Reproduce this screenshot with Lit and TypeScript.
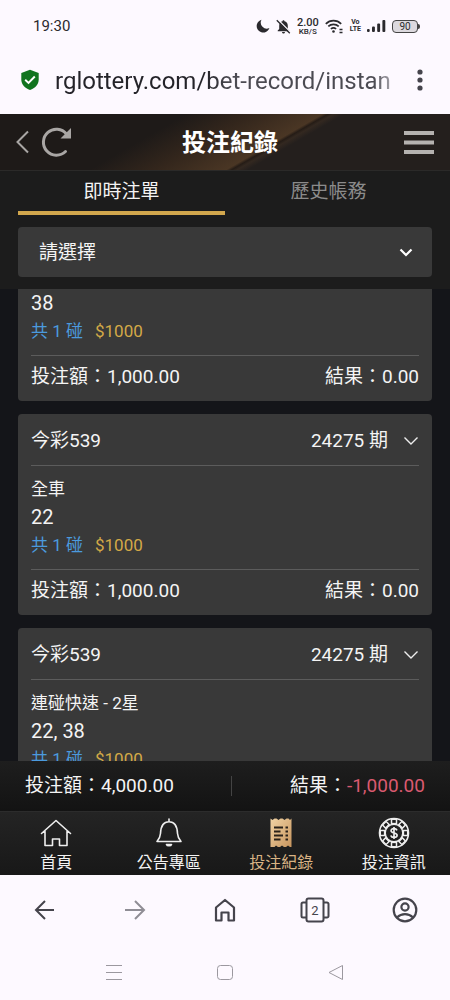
import { LitElement, html, css, svg } from "lit";
import { customElement, property, query } from "lit/decorators.js";
import { classMap } from "lit/directives/class-map.js";

interface Bet {
  game: string;
  issue: string;
  play: string;
  numbers: string;
  combos: number;
  stake: string;
  amount: string;
  result: string;
}

const bets: Bet[] = [
  { game: "今彩539", issue: "24275 期", play: "全車", numbers: "38", combos: 1, stake: "$1000", amount: "1,000.00", result: "0.00" },
  { game: "今彩539", issue: "24275 期", play: "全車", numbers: "22", combos: 1, stake: "$1000", amount: "1,000.00", result: "0.00" },
  { game: "今彩539", issue: "24275 期", play: "連碰快速 - 2星", numbers: "22, 38", combos: 1, stake: "$1000", amount: "1,000.00", result: "0.00" },
];

const fontStack = css`Roboto, "Noto Sans CJK TC", sans-serif`;

@customElement("bet-card")
export class BetCard extends LitElement {
  @property({ attribute: false }) bet!: Bet;

  static styles = css`
    :host {
      display: block;
      background: #393939;
      border-radius: 4px;
      padding: 0 13px 10px;
      color: #f4f4f4;
      font: 19px/28px ${fontStack};
    }
    .head {
      display: flex;
      align-items: center;
      justify-content: space-between;
      width: 100%;
      height: 52px;
      padding: 3px 0 0;
      border: 0;
      border-bottom: 1px solid #5c5c5c;
      background: none;
      color: inherit;
      font: inherit;
    }
    .issue {
      display: flex;
      align-items: center;
      gap: 15px;
    }
    .body {
      padding: 9px 0 10px;
      border-bottom: 1px solid #5c5c5c;
    }
    .play {
      font-size: 17px;
    }
    .numbers {
      font-size: 20px;
    }
    .stake {
      display: flex;
      gap: 12px;
      font-size: 17px;
      color: #d3a947;
    }
    .combos {
      color: #4b9ade;
    }
    .foot {
      display: flex;
      justify-content: space-between;
      padding-top: 7px;
    }
  `;

  render() {
    const b = this.bet;
    return html`
      <button class="head">
        <span>${b.game}</span>
        <span class="issue">
          ${b.issue}
          <svg width="16" height="16" viewBox="0 0 16 16" fill="none" stroke="#eee" stroke-width="1.4">
            <path d="M1.5 4.5 8 11l6.500-6.500" />
          </svg>
        </span>
      </button>
      <div class="body">
        <div class="play">${b.play}</div>
        <div class="numbers">${b.numbers}</div>
        <div class="stake"><span class="combos">共 ${b.combos} 碰</span><span>${b.stake}</span></div>
      </div>
      <div class="foot">
        <span>投注額：${b.amount}</span>
        <span>結果：${b.result}</span>
      </div>
    `;
  }
}

const houseIcon = html`<svg width="32" height="32" viewBox="0 0 32 32" fill="none" stroke="#eee" stroke-width="1.600" stroke-linejoin="round" stroke-linecap="round">
  <path d="M1.500 16.500 16 3.500l14.500 13M5 14.500V28.500h7.500v-6.500h7v6.500H27V14.500" />
</svg>`;

const bellIcon = html`<svg width="32" height="32" viewBox="0 0 32 32" fill="none" stroke="#eee" stroke-width="1.600" stroke-linejoin="round" stroke-linecap="round">
  <path d="M16 4.500V2M4 24.500c2.200-2.500 3.300-4.500 3.500-8C7.800 9.500 10.500 4.800 16 4.800s8.200 4.700 8.500 11.700c.2 3.500 1.300 5.500 3.500 8z" />
  <path d="M13.500 27.500h5c-.5 1.700-4.500 1.700-5 0z" fill="#eee" />
</svg>`;

const receiptIcon = html`<svg width="32" height="32" viewBox="0 0 32 32">
  <defs>
    <linearGradient id="gold" x1="0" y1="0" x2="1" y2="1">
      <stop offset="0" stop-color="#f1d3a4" />
      <stop offset="1" stop-color="#c7955e" />
    </linearGradient>
  </defs>
  <path fill="url(#gold)" d="M5.500 1.500 7.500 3 9.500 1.500h2l2 1.500 2-1.500h2l2 1.500 2-1.500h2L25 3l1.500-1.500v28.500h-1.500l-2-1.500-2 1.500h-2l-2-1.500-2 1.500h-2l-2-1.500L9.500 30h-2L5.500 30z" />
  <path stroke="#2a221a" stroke-width="1.800" d="M9 10.500h9M9 14.500h6.500M9 18.500h9M9 22.500h6.500M20.500 10.500h2.500M20.500 14.500h2.500M20.500 18.500h2.500M20.500 22.500h2.500" />
</svg>`;

const chipIcon = html`<svg width="32" height="32" viewBox="0 0 32 32" fill="none" stroke="#eee">
  <circle cx="16" cy="16" r="14.500" stroke-width="1.600" />
  <circle cx="16" cy="16" r="8.800" stroke-width="1.500" />
  ${[0, 45, 90, 135, 180, 225, 270, 315].map(
    (a) => svg`<rect x="13.500" y="2.300" width="5" height="4.300" fill="#1b1b1b" stroke-width="1.500" transform="rotate(${a} 16 16)" />`
  )}
  <path stroke-width="1.700" d="M19 13.300c-.5-1.200-1.600-1.700-3-1.700-1.700 0-2.900.8-2.900 2.100 0 3.100 6 1.400 6 4.600 0 1.300-1.300 2.100-3.100 2.100-1.600 0-2.800-.6-3.200-1.900M16 10v12" />
</svg>`;

const navItems = [
  { label: "首頁", icon: houseIcon, active: false },
  { label: "公告專區", icon: bellIcon, active: false },
  { label: "投注紀錄", icon: receiptIcon, active: true },
  { label: "投注資訊", icon: chipIcon, active: false },
];

@customElement("app-root")
export class AppRoot extends LitElement {
  @query(".list") list!: HTMLElement;

  static styles = css`
    :host {
      display: flex;
      flex-direction: column;
      height: 100vh;
      background: #141519;
      color: #f4f4f4;
      font: 19px/28px ${fontStack};
    }
    * {
      box-sizing: border-box;
    }
    svg {
      display: block;
      flex: none;
    }
    button {
      display: flex;
      align-items: center;
      justify-content: center;
      padding: 0;
      border: 0;
      background: none;
      color: inherit;
      font: inherit;
    }

    .status {
      display: flex;
      align-items: center;
      justify-content: space-between;
      height: 52px;
      padding: 0 30px 0 33px;
      background: #fdf9ff;
      color: #2b2a2e;
      font-size: 15px;
    }
    .indicators {
      display: flex;
      align-items: center;
      gap: 6px;
    }
    .rate,
    .volte {
      display: flex;
      flex-direction: column;
      align-items: center;
      font-weight: 500;
    }
    .rate {
      font-size: 11px;
      line-height: 10px;
    }
    .unit {
      font-size: 8px;
      line-height: 7px;
    }
    .volte {
      font-size: 7px;
      line-height: 7px;
      font-weight: 700;
    }
    .battery {
      display: flex;
      align-items: center;
    }
    .charge {
      width: 26px;
      border: 1px solid #444;
      border-radius: 4px;
      background: #dcd9de;
      font-size: 10px;
      line-height: 11px;
      text-align: center;
    }
    .tip {
      width: 2px;
      height: 5px;
      border-radius: 0 2px 2px 0;
      background: #444;
    }

    .address {
      display: flex;
      align-items: center;
      height: 62px;
      padding: 0 20px 6px;
      background: #fdf9ff;
    }
    .url {
      flex: 1;
      min-width: 0;
      height: 34px;
      margin: 0 16px 0 15px;
      padding: 2px 0 0;
      border: 0;
      outline: 0;
      background: linear-gradient(90deg, #242329 150px, #4b4a52 175px, #4b4a52 calc(100% - 20px), #b5b2ba);
      -webkit-background-clip: text;
      background-clip: text;
      color: transparent;
      font: 24px/32px Roboto, sans-serif;
    }

    .header {
      display: grid;
      grid-template-columns: 1fr auto 1fr;
      align-items: center;
      height: 57px;
      padding: 0 16px;
      border-bottom: 1px solid #2b2a29;
      background: linear-gradient(150deg, #1e1a18 34%, #33261c 46%, #4a3624 59%, #251c16 60%, #332820 61%, #241f1d 63%);
    }
    .left {
      display: flex;
      align-items: center;
      gap: 12px;
    }
    .title {
      margin: 0;
      padding: 2px 0 0 10px;
      font-size: 24px;
      font-weight: 700;
      color: #fff;
    }
    .menu {
      justify-self: end;
    }

    .filters {
      padding: 0 18px 12px;
      background: #1c1c1c;
    }
    .tabs {
      display: grid;
      grid-template-columns: 1fr 1fr;
      margin-bottom: 12px;
    }
    .tab {
      height: 44px;
      padding-top: 2px;
      border-bottom: 4px solid transparent;
      color: #8b8b8b;
    }
    .tab.active {
      border-color: #d2a74d;
      color: #f4f4f4;
    }
    .picker {
      display: block;
      position: relative;
    }
    .select {
      display: block;
      width: 100%;
      height: 50px;
      padding: 2px 21px 0;
      border: 0;
      border-radius: 4px;
      background: #393939;
      color: #f4f4f4;
      font: inherit;
      appearance: none;
    }
    .caret {
      position: absolute;
      right: 19px;
      top: 18px;
      pointer-events: none;
    }

    .list {
      flex: 1;
      min-height: 0;
      overflow-y: auto;
      scrollbar-width: none;
      display: flex;
      flex-direction: column;
      gap: 13px;
      padding: 12px 18px;
    }
    .card {
      flex: none;
    }

    .summary {
      display: flex;
      align-items: center;
      justify-content: space-between;
      height: 50px;
      padding: 0 25px;
      background: linear-gradient(#1e1e1e, #131313);
    }
    .rule {
      width: 1px;
      height: 20px;
      background: #444;
    }
    .loss {
      color: #da5a70;
    }

    .nav {
      display: grid;
      grid-template-columns: repeat(4, 1fr);
      height: 64px;
      border-top: 1px solid #2c2c2c;
      background: linear-gradient(#242424, #181818);
      font-size: 16px;
      line-height: 24px;
    }
    .link {
      display: flex;
      flex-direction: column;
      align-items: center;
      gap: 2px;
      padding-top: 5px;
      color: #f4f4f4;
      text-decoration: none;
    }
    .link.active {
      color: #d9b384;
    }

    .toolbar {
      display: grid;
      grid-template-columns: repeat(5, 1fr);
      height: 70px;
      background: #fdf9ff;
      color: #45444c;
    }
    .toolbar .off {
      color: #8f8d95;
    }
    .system {
      display: grid;
      grid-template-columns: repeat(3, 1fr);
      height: 55px;
      padding: 0 13%;
      background: #fdf9ff;
      color: #9b989f;
    }
  `;

  firstUpdated() {
    // Open the list part-way through the first bet.
    requestAnimationFrame(() => {
      this.list.scrollTop = 101;
    });
  }

  render() {
    return html`
      <div class="status">
        <span>19:30</span>
        <div class="indicators">
          <svg width="14" height="14" viewBox="0 0 14 14" fill="#2b2a2e"><path d="M5.500.8A6.500 6.500 0 1 0 13.400 9 6 6 0 0 1 5.500.8z" /></svg>
          <svg width="15" height="15" viewBox="0 0 15 15"><path fill="#2b2a2e" d="M7.500 1.200c.7 0 1 .5 1 1.100 2 .5 3.300 2.200 3.300 4.400v3.200l1.500 1.600v.7H1.700v-.7l1.500-1.600V6.700c0-2.200 1.300-3.900 3.300-4.400 0-.6.300-1.100 1-1.100zM6 13h3c0 .9-.6 1.500-1.500 1.500S6 13.900 6 13z" /><path stroke="#fdf9ff" stroke-width="1.200" d="m1.800.5 13 13" /><path stroke="#2b2a2e" stroke-width="1.300" d="m.8 1.200 13 13" /></svg>
          <div class="rate"><span>2.00</span><span class="unit">KB/S</span></div>
          <svg width="19" height="16" viewBox="0 0 19 16" fill="none" stroke="#2b2a2e" stroke-width="1.700"><path d="M.8 5.800a11 11 0 0 1 15.400 0M3.300 8.400a7.500 7.500 0 0 1 10.400 0M5.900 11a3.800 3.800 0 0 1 5.200 0" /><circle cx="8.500" cy="13.500" r="1.300" fill="#2b2a2e" stroke="none" /><path stroke-width="1.500" d="M14.500 11.500h3M14.500 14.500h3" /></svg>
          <div class="volte"><span>Vo</span><span>LTE</span></div>
          <svg width="19" height="14" viewBox="0 0 19 14" fill="#2b2a2e"><rect x="0" y="10" width="2.700" height="3" rx="1" /><rect x="5" y="7.500" width="2.900" height="5.500" rx="1" /><rect x="10.200" y="4.500" width="2.900" height="8.500" rx="1" /><rect x="15.400" y="1" width="2.900" height="12" rx="1" /></svg>
          <div class="battery"><span class="charge">90</span><span class="tip"></span></div>
        </div>
      </div>

      <div class="address">
        <svg width="20" height="22" viewBox="0 0 20 22"><path fill="#11741f" d="M10 .8 18.700 4v6.500c0 5-3.600 8.800-8.700 10.500C4.900 19.300 1.300 15.500 1.300 10.500V4z" /><path fill="none" stroke="#fff" stroke-width="1.900" d="m5.200 10.800 3.300 3.200 6.300-6.500" /></svg>
        <input class="url" type="text" aria-label="網址" readonly .value=${"rglottery.com/bet-record/instan"} />
        <button aria-label="更多">
          <svg width="20" height="24" viewBox="0 0 20 24" fill="#45444c"><circle cx="10" cy="4" r="2.600" /><circle cx="10" cy="12" r="2.600" /><circle cx="10" cy="20" r="2.600" /></svg>
        </button>
      </div>

      <header class="header">
        <div class="left">
          <button aria-label="返回"><svg width="13" height="24" viewBox="0 0 13 24" fill="none" stroke="#a9a6a4" stroke-width="2"><path d="M12 1.500 1.500 12 12 22.500" /></svg></button>
          <button aria-label="重新整理"><svg width="32" height="32" viewBox="0 0 32 32" fill="none" stroke="#a9a6a4" stroke-width="3"><path stroke-linecap="round" d="M24.500 25.500A13 13 0 1 1 25.500 8" /><path fill="#a9a6a4" stroke="none" d="M30 2v10.500H19.500z" /></svg></button>
        </div>
        <h1 class="title">投注紀錄</h1>
        <button class="menu" aria-label="選單"><svg width="30" height="24" viewBox="0 0 30 24" stroke="#b5b2b0" stroke-width="4"><path d="M0 3h30M0 12.500h30M0 22h30" /></svg></button>
      </header>

      <div class="filters">
        <div class="tabs" role="tablist">
          <button class="tab active" role="tab" aria-selected="true">即時注單</button>
          <button class="tab" role="tab" aria-selected="false">歷史帳務</button>
        </div>
        <label class="picker">
          <select class="select" aria-label="請選擇">
            <option>請選擇</option>
          </select>
          <svg class="caret" width="14" height="14" viewBox="0 0 14 14" fill="none" stroke="#fff" stroke-width="2.200"><path d="m1.500 4.500 5.500 5.500 5.500-5.500" /></svg>
        </label>
      </div>

      <main class="list">
        ${bets.map((b) => html`<bet-card class="card" .bet=${b}></bet-card>`)}
      </main>

      <div class="summary">
        <span>投注額：4,000.00</span>
        <span class="rule"></span>
        <span>結果：<span class="loss">-1,000.00</span></span>
      </div>

      <nav class="nav">
        ${navItems.map(
          (n) => html`<a href="#" class=${classMap({ link: true, active: n.active })}>${n.icon}<span>${n.label}</span></a>`
        )}
      </nav>

      <div class="toolbar">
        <button aria-label="上一頁"><svg width="24" height="24" viewBox="0 0 24 24" fill="none" stroke="currentColor" stroke-width="2"><path d="M21 12H4M12 3l-9 9 9 9" /></svg></button>
        <button class="off" aria-label="下一頁"><svg width="24" height="24" viewBox="0 0 24 24" fill="none" stroke="currentColor" stroke-width="2"><path d="M2 12h18M12 3l9 9-9 9" /></svg></button>
        <button aria-label="主畫面"><svg width="24" height="26" viewBox="0 0 24 26" fill="none" stroke="currentColor" stroke-width="2.200" stroke-linejoin="round"><path d="M3 10.500 12 3l9 7.500V23.500h-5.500v-8h-7v8H3z" /></svg></button>
        <button aria-label="分頁"><svg width="32" height="28" viewBox="0 0 32 28" fill="none" stroke="currentColor" stroke-width="2"><rect x="7.500" y="2.500" width="17" height="23" rx="2" /><path d="M7 6.500H4A1.500 1.500 0 0 0 2.500 8v12A1.500 1.500 0 0 0 4 21.500h3M25 6.500h3A1.500 1.500 0 0 1 29.500 8v12a1.500 1.500 0 0 1-1.500 1.500h-3" /><text x="16" y="19" text-anchor="middle" font-size="13" fill="currentColor" stroke="none">2</text></svg></button>
        <button aria-label="帳戶"><svg width="26" height="26" viewBox="0 0 26 26" fill="none" stroke="currentColor" stroke-width="2.200"><circle cx="13" cy="13" r="11.300" /><circle cx="13" cy="10" r="3.600" /><path d="M5 20.500c4.500-4.500 11.500-4.500 16 0" /></svg></button>
      </div>

      <div class="system">
        <button aria-label="最近使用"><svg width="16" height="16" viewBox="0 0 16 16" stroke="currentColor" stroke-width="1"><path d="M0 .5h16M0 7.500h16M0 14.500h16" /></svg></button>
        <button aria-label="首頁"><svg width="16" height="16" viewBox="0 0 16 16" fill="none" stroke="currentColor"><rect x=".5" y=".5" width="15" height="14" rx="3" /></svg></button>
        <button aria-label="返回"><svg width="16" height="16" viewBox="0 0 16 16" fill="none" stroke="currentColor" stroke-linejoin="round"><path d="M14.500.5v14L1 7.500z" /></svg></button>
      </div>
    `;
  }
}
